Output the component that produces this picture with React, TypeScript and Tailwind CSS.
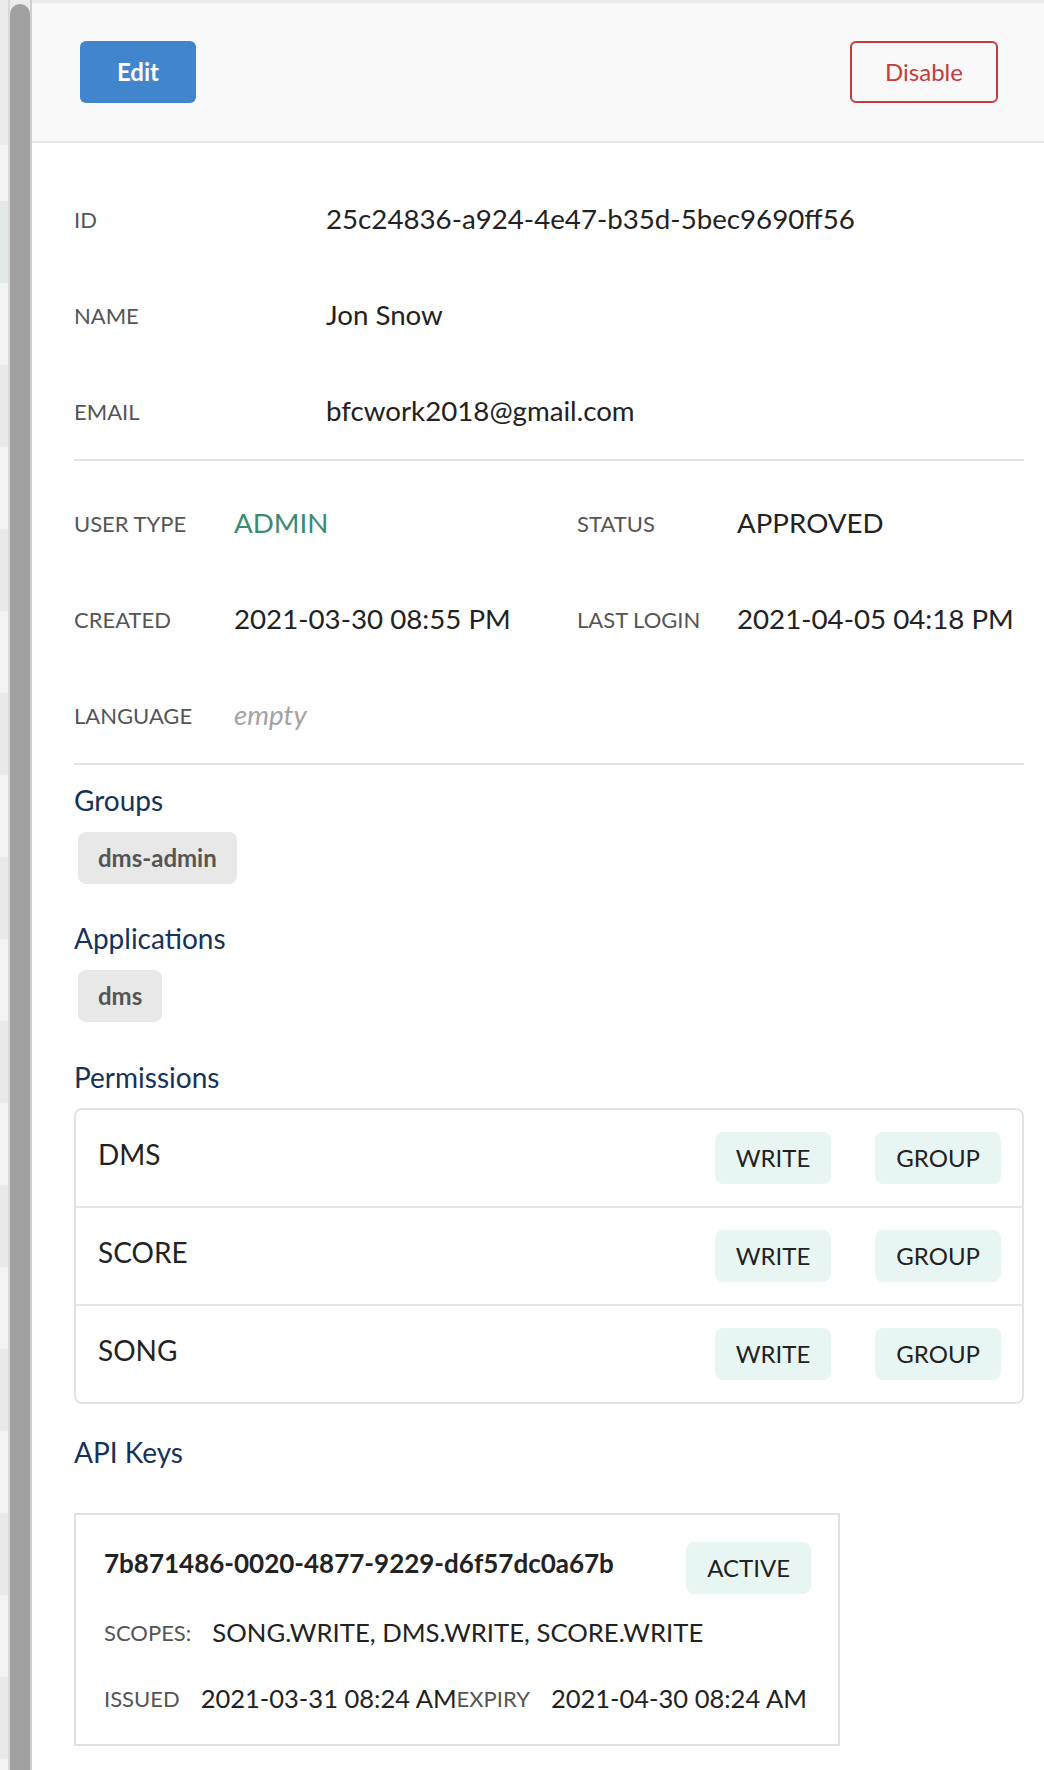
import React from "react";

const stripRows = (() => {
  const rows: { h: number; c: string }[] = [
    { h: 145, c: "bg-[#ececec]" },
    { h: 56, c: "bg-[#f3f3f3]" },
    { h: 82, c: "bg-[#e3e9e9]" },
  ];
  for (let i = 0; i < 19; i++) {
    rows.push({ h: 82, c: i % 2 === 0 ? "bg-[#f3f3f3]" : "bg-[#e9e9e9]" });
  }
  return rows;
})();

function InfoRow({ label, value }: { label: string; value: string }) {
  return (
    <div className="flex h-[96px] items-center">
      <div className="w-[252px] text-[22px] text-[#555]">{label}</div>
      <div className="text-[27.7px] text-[#222]">{value}</div>
    </div>
  );
}

function Pair({
  label,
  children,
}: {
  label: string;
  children: React.ReactNode;
}) {
  return (
    <>
      <div className="flex h-[96px] items-center text-[22px] text-[#555]">
        {label}
      </div>
      <div className="flex h-[96px] items-center whitespace-nowrap text-[27.7px] text-[#222]">
        {children}
      </div>
    </>
  );
}

function Heading({ children }: { children: React.ReactNode }) {
  return (
    <div className="h-[36px] text-[28px] leading-[36px] text-[#15325b]">
      {children}
    </div>
  );
}

function Chip({ children }: { children: React.ReactNode }) {
  return (
    <span className="ml-[4px] inline-flex h-[52px] items-center rounded-[8px] bg-[#e8e8e8] px-[20px] text-[24px] font-bold text-[#555]">
      {children}
    </span>
  );
}

function Badge({ children }: { children: React.ReactNode }) {
  return (
    <span className="inline-flex h-[52px] items-center rounded-[8px] bg-[#e8f6f3] px-[21px] text-[24px] text-[#222]">
      {children}
    </span>
  );
}

const permissions = ["DMS", "SCORE", "SONG"];

export default function App() {
  return (
    <div className="flex min-h-[1770px] w-[1044px] bg-white font-['Lato',sans-serif]">
      <div className="flex w-[8px] flex-col">
        {stripRows.map((r, i) => (
          <div key={i} className={`${r.c} shrink-0`} style={{ height: r.h }} />
        ))}
      </div>
      <div className="w-[2px] bg-[#d9d9d9]" />
      <div className="w-[20px] bg-[#ececec] pt-[4px]">
        <div className="h-full rounded-t-full bg-[#a0a0a0]" />
      </div>
      <div className="w-[2px] bg-[#cfcfcf]" />

      <div className="flex-1">
        <div className="flex items-center justify-between border-t-[3px] border-b-2 border-t-[#ebebeb] border-b-[#e6e6e6] bg-[#f9f9f9] pl-[48px] pr-[46px] py-[38px]">
          <button className="h-[62px] w-[116px] rounded-[6px] bg-[#4186cc] text-[24px] font-bold text-white">
            Edit
          </button>
          <button className="h-[62px] w-[148px] rounded-[6px] border-2 border-[#c93a3a] text-[24px] text-[#c93a3a]">
            Disable
          </button>
        </div>

        <div className="pl-[42px] pr-[20px]">
          <div className="border-b-2 border-[#e3e3e3] pt-[28px]">
            <InfoRow label="ID" value="25c24836-a924-4e47-b35d-5bec9690ff56" />
            <InfoRow label="NAME" value="Jon Snow" />
            <InfoRow label="EMAIL" value="bfcwork2018@gmail.com" />
          </div>

          <div className="grid grid-cols-[160px_343px_160px_1fr] border-b-2 border-[#e3e3e3] pt-[14px]">
            <Pair label="USER TYPE">
              <span className="text-[#3b8b70]">ADMIN</span>
            </Pair>
            <Pair label="STATUS">APPROVED</Pair>
            <Pair label="CREATED">2021-03-30 08:55 PM</Pair>
            <Pair label="LAST LOGIN">2021-04-05 04:18 PM</Pair>
            <Pair label="LANGUAGE">
              <span className="italic text-[#a3a3a3]">empty</span>
            </Pair>
          </div>

          <div className="mt-[17px]">
            <Heading>Groups</Heading>
            <div className="mt-[14px]">
              <Chip>dms-admin</Chip>
            </div>
          </div>

          <div className="mt-[36px]">
            <Heading>Applications</Heading>
            <div className="mt-[14px]">
              <Chip>dms</Chip>
            </div>
          </div>

          <div className="mt-[37px]">
            <Heading>Permissions</Heading>
            <div className="mt-[13px] rounded-[8px] border-2 border-[#e2e2e2]">
              {permissions.map((p, i) => (
                <React.Fragment key={p}>
                  {i > 0 && <div className="h-[2px] bg-[#e6e6e6]" />}
                  <div className="flex h-[96px] items-start justify-between pl-[22px] pr-[21px] pt-[22px]">
                    <div className="pt-[4px] text-[28px] leading-[36px] text-[#222]">
                      {p}
                    </div>
                    <div className="flex gap-[44px]">
                      <Badge>WRITE</Badge>
                      <Badge>GROUP</Badge>
                    </div>
                  </div>
                </React.Fragment>
              ))}
            </div>
          </div>

          <div className="mt-[30px]">
            <Heading>API Keys</Heading>
            <div className="mt-[43px] w-[766px] border-2 border-[#e0e0e0] pb-[13px] pl-[28px] pr-[27px] pt-[27px]">
              <div className="flex items-start justify-between">
                <div className="pt-[3px] text-[26px] font-bold leading-[36px] text-[#222]">
                  7b871486-0020-4877-9229-d6f57dc0a67b
                </div>
                <Badge>ACTIVE</Badge>
              </div>
              <div className="mt-[5px] flex h-[66px] items-center whitespace-nowrap">
                <span className="mr-[21px] text-[22px] text-[#555]">SCOPES:</span>
                <span className="text-[25.7px] text-[#222]">
                  SONG.WRITE, DMS.WRITE, SCORE.WRITE
                </span>
              </div>
              <div className="flex h-[66px] items-center whitespace-nowrap">
                <span className="mr-[21px] text-[22px] text-[#555]">ISSUED</span>
                <span className="text-[25.5px] text-[#222]">2021-03-31 08:24 AM</span>
                <span className="mr-[21px] text-[22px] text-[#555]">EXPIRY</span>
                <span className="text-[25.5px] text-[#222]">2021-04-30 08:24 AM</span>
              </div>
            </div>
          </div>
        </div>
      </div>
    </div>
  );
}
